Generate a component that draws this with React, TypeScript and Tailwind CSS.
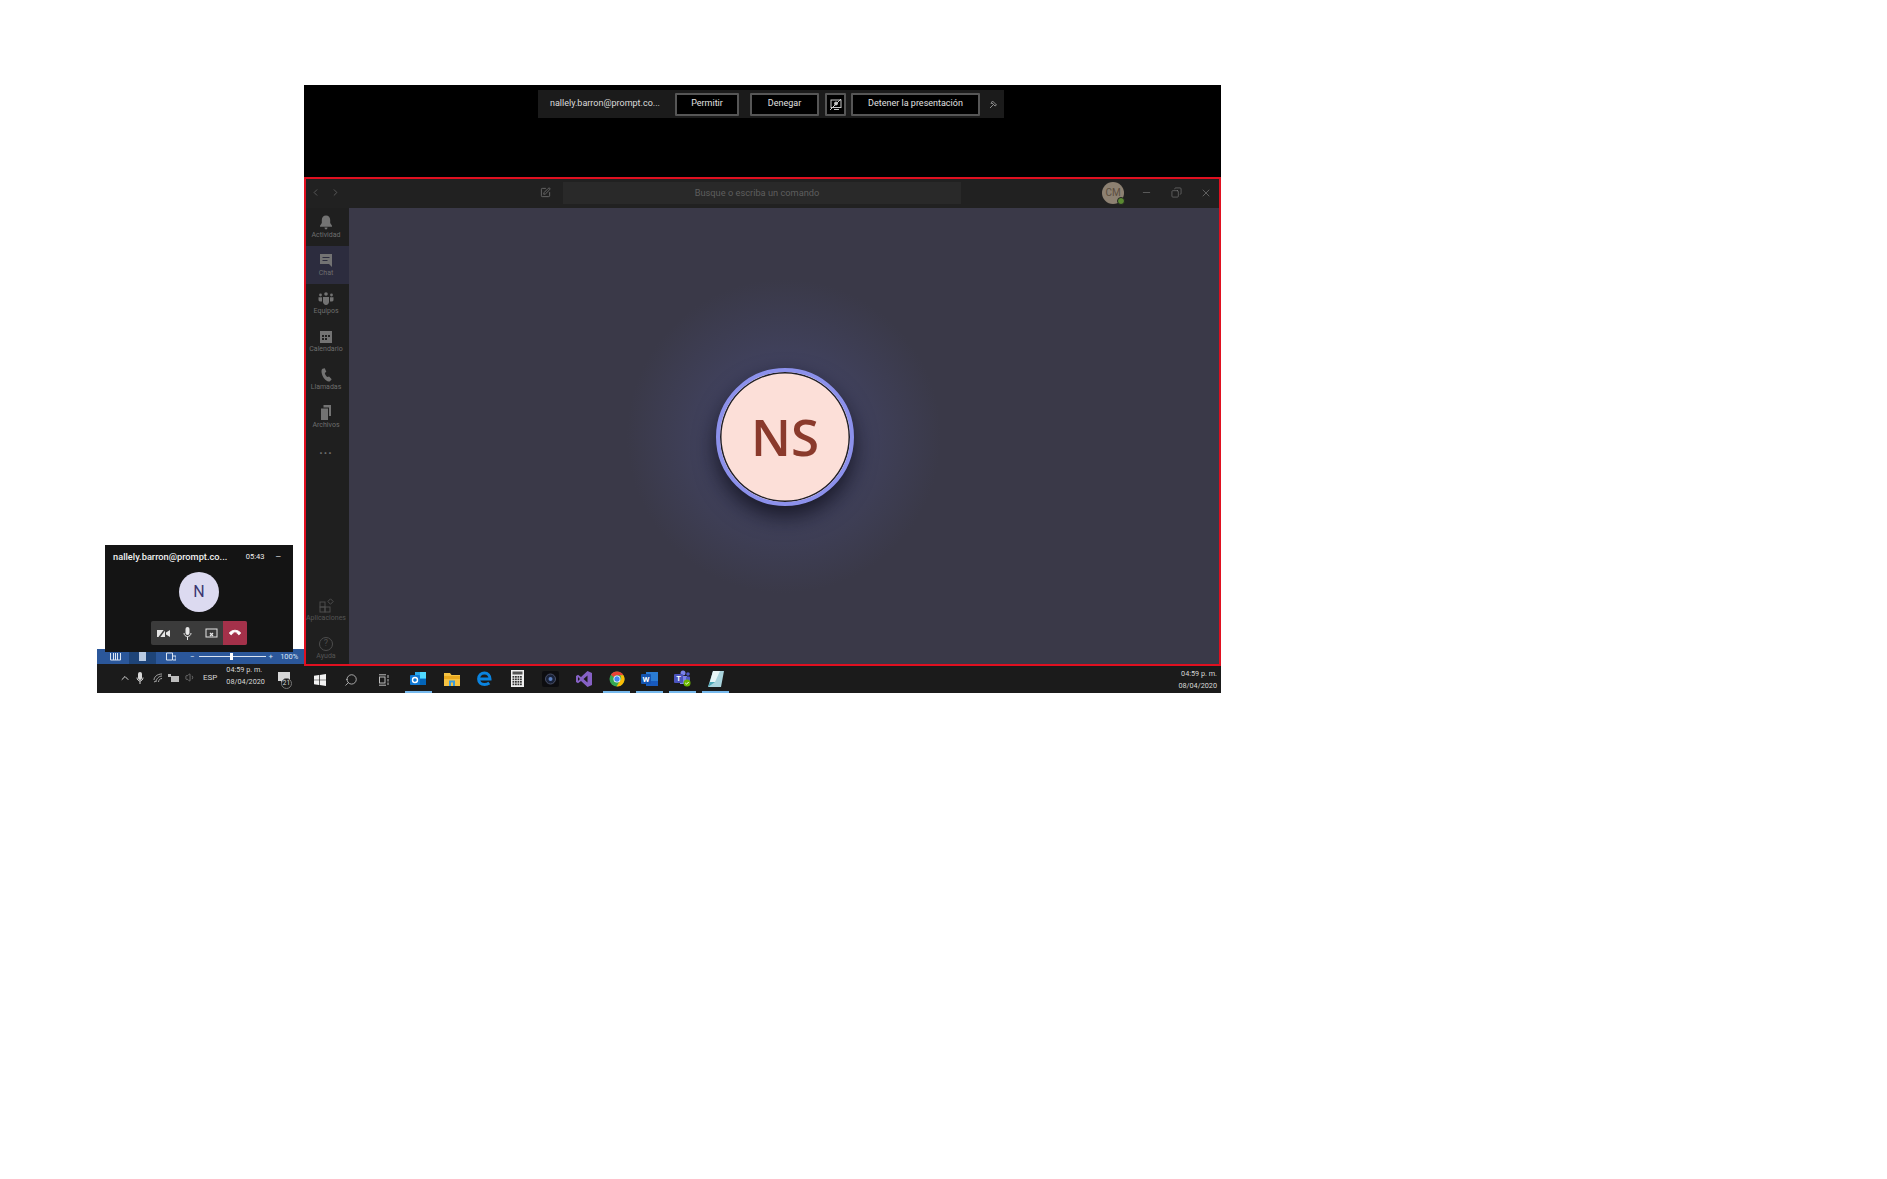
import { ReactNode } from "react";
import { ChevronLeft, ChevronRight, ChevronUp, Copy, Minus, Phone, Search, SquarePen, Volume1, X } from "lucide-react";

const font = "font-['Roboto','Liberation_Sans',sans-serif]";

// icons from the left rail, filled grey like the Teams dark theme
const BellIcon = () => (
  <svg width="14" height="15" viewBox="0 0 14 15" fill="currentColor">
    <path d="M7 0.5c-2.6 0-4.2 2-4.2 4.4v3.2L1 10.8v1h12v-1l-1.8-2.7V4.9C11.2 2.5 9.6 0.5 7 0.5z" />
    <path d="M5.5 12.6h3c0 1-.6 1.8-1.5 1.8s-1.500-.8-1.500-1.800z" />
  </svg>
);

const ChatIcon = () => (
  <svg width="14" height="15" viewBox="0 0 14 15" fill="currentColor">
    <path fillRule="evenodd" d="M1 1h12v13l-3-3H1V1zm2.500 3v1h7V4h-7zm0 3v1h5V7h-5z" />
  </svg>
);

const TeamIcon = () => (
  <svg width="16" height="13" viewBox="0 0 16 13" fill="currentColor">
    <circle cx="8" cy="2" r="1.800" />
    <circle cx="2.500" cy="3" r="1.400" />
    <circle cx="13.500" cy="3" r="1.400" />
    <path d="M5 5h6v5c0 1.500-1.300 3-3 3s-3-1.500-3-3V5z" />
    <path d="M0.500 5.200h3.500V9.500H2C1 9.500.5 8.500.5 7.500z" />
    <path d="M12 5.200h3.500v2.300c0 1-.5 2-1.500 2h-2z" />
  </svg>
);

const CalendarIcon = () => (
  <svg width="14" height="14" viewBox="0 0 14 14" fill="currentColor">
    <path fillRule="evenodd" d="M1 1h12v12H1V1zm2 4v2h2V5H3zm3 0v2h2V5H6zm3 0v2h2V5H9zM3 8v2h2V8H3zm3 0v2h2V8H6z" />
  </svg>
);

const CallIcon = () => (
  <svg width="13" height="14" viewBox="0 0 13 14" fill="currentColor">
    <path d="M2.500.8 4.800.2l1.500 3.600-1.500 1.300c.3 1.500 1.300 3.200 2.500 4l1.800-.7 2.600 2.900-1.700 1.900c-1 .6-2.500.3-3.700-.6C3.700 10.700 1.500 6.500 1.500 3.200c0-1 .3-1.900 1-2.400z" />
  </svg>
);

const FilesIcon = () => (
  <svg width="12" height="15" viewBox="0 0 12 15" fill="currentColor">
    <path d="M3.500 0H11v11H9V2.500H3.500z" />
    <path d="M1 3.500h7V15H1z" />
  </svg>
);

const AppsIcon = () => (
  <svg width="15" height="15" viewBox="0 0 15 15" fill="none" stroke="currentColor" strokeWidth="1">
    <rect x="1" y="4" width="5" height="5" />
    <rect x="1" y="9" width="5" height="5" />
    <rect x="6" y="9" width="5" height="5" />
    <path d="M11.500.8 14.200 3.500 11.500 6.200 8.800 3.500z" />
  </svg>
);

const railTop = [
  { label: "Actividad", icon: <BellIcon /> },
  { label: "Chat", icon: <ChatIcon />, active: true },
  { label: "Equipos", icon: <TeamIcon /> },
  { label: "Calendario", icon: <CalendarIcon /> },
  { label: "Llamadas", icon: <CallIcon /> },
  { label: "Archivos", icon: <FilesIcon /> },
];

const RailItem = ({ label, icon, active, dim }: { label: string; icon: ReactNode; active?: boolean; dim?: boolean }) => (
  <div
    className={`flex h-[38px] flex-col items-center justify-center pr-[3px] ${active ? "bg-[#2c2c3e]" : ""} ${
      dim ? "text-[#4d4d4d]" : "text-[#737373]"
    }`}
  >
    <div className="flex h-[16px] items-center">{icon}</div>
    <span className={`text-[7px] leading-[9px] ${dim ? "text-[#555555]" : "text-[#6e6e6e]"}`}>{label}</span>
  </div>
);

const OutlineButton = ({ children, className }: { children: ReactNode; className: string }) => (
  <div className={`flex h-[23px] items-center justify-center rounded-[1px] border-2 border-[#565656] bg-black text-[9px] text-[#e0e0e0] ${className}`}>
    {children}
  </div>
);

const OutlookIcon = () => (
  <svg width="17" height="16" viewBox="0 0 17 16">
    <rect x="5" y="1" width="11" height="13" fill="#28a8ea" />
    <rect x="10" y="1" width="6" height="6" fill="#50d9ff" />
    <rect x="5" y="8" width="11" height="6" fill="#0364b8" />
    <rect x="0" y="4" width="10" height="10" rx="1" fill="#0f78d4" />
    <circle cx="5" cy="9" r="2.500" fill="none" stroke="#ffffff" strokeWidth="1.400" />
  </svg>
);

const FolderIcon = () => (
  <svg width="16" height="14" viewBox="0 0 16 14">
    <path d="M0 1h6l1.500 2H16v11H0z" fill="#f5c242" />
    <rect x="0" y="4" width="16" height="3" fill="#e9a91f" />
    <rect x="5" y="8.500" width="6" height="5.500" fill="#3a9bdc" />
    <rect x="7" y="10.500" width="2" height="3.500" fill="#f5c242" />
  </svg>
);

const EdgeIcon = () => (
  <svg width="15" height="15" viewBox="0 0 15 15" fill="none" stroke="#0a84e0" strokeWidth="3">
    <path d="M2 8h11c0-3.500-2.300-6-5.500-6S1.600 4.500 1.600 8s2.500 5.500 5.900 5.500c2 0 3.500-.5 4.800-1.500" />
  </svg>
);

const CalcIcon = () => (
  <svg width="13" height="17" viewBox="0 0 13 17">
    <rect width="13" height="17" fill="#f0f0f0" />
    <rect x="1.500" y="1.500" width="10" height="3" fill="#555555" />
    {[6, 8.500, 11, 13.500].map((y) =>
      [1.500, 4, 6.500, 9].map((x) => <rect key={`${x}-${y}`} x={x} y={y} width="1.800" height="1.700" fill="#333333" />)
    )}
  </svg>
);

const CameraIcon = () => (
  <svg width="17" height="16" viewBox="0 0 17 16">
    <rect width="17" height="16" rx="2" fill="#0d0d10" />
    <circle cx="8.500" cy="8" r="5" fill="#1a2238" stroke="#4a5068" />
    <circle cx="8.500" cy="8" r="2" fill="#5b7fc0" />
  </svg>
);

const VisualStudioIcon = () => (
  <svg width="16" height="16" viewBox="0 0 16 16">
    <path d="M11.500 0 16 2v12l-4.500 2L5 10l-3 2.300L0 11V5l2-1.300L5 6z" fill="#8661c5" />
    <path d="M2 6v4l2-2zM11.500 4.500 7.500 8l4 3.500z" fill="#1b1b1b" />
  </svg>
);

const ChromeIcon = () => (
  <svg width="16" height="16" viewBox="0 0 16 16">
    <circle cx="8" cy="8" r="7.500" fill="#34a853" />
    <path d="M8 .5a7.500 7.500 0 0 1 6.500 3.750H8A3.750 3.750 0 0 0 4.700 6.200L1.900 3.700A7.500 7.500 0 0 1 8 .5z" fill="#ea4335" />
    <path d="M14.500 4.250A7.500 7.500 0 0 1 7.500 15.500L10.800 10a3.750 3.750 0 0 0 .2-5.750z" fill="#fbbc05" />
    <circle cx="8" cy="8" r="3.500" fill="#ffffff" />
    <circle cx="8" cy="8" r="2.700" fill="#4285f4" />
  </svg>
);

const WordIcon = () => (
  <svg width="17" height="16" viewBox="0 0 17 16">
    <rect x="5" y="1" width="12" height="14" fill="#2b7cd3" />
    <rect x="5" y="10" width="12" height="5" fill="#185abd" />
    <rect x="0" y="3" width="10" height="10" rx="1" fill="#1454b0" />
    <text x="5" y="11" fontSize="8" fontWeight="700" textAnchor="middle" fill="#ffffff">W</text>
  </svg>
);

const TeamsIcon = () => (
  <svg width="17" height="17" viewBox="0 0 17 17">
    <circle cx="9" cy="3" r="2.500" fill="#7b83eb" />
    <circle cx="14" cy="4" r="1.800" fill="#5059c9" />
    <rect x="6" y="6" width="7" height="8" fill="#7b83eb" />
    <rect x="12" y="6.500" width="4" height="6" rx="1" fill="#5059c9" />
    <rect x="0" y="4" width="9" height="9" rx="1" fill="#4b53bc" />
    <text x="4.500" y="11" fontSize="7.500" fontWeight="700" textAnchor="middle" fill="#ffffff">T</text>
    <circle cx="13" cy="13" r="3.500" fill="#6bb700" />
    <path d="M11.300 13l1.200 1.200 2.200-2.200" fill="none" stroke="#ffffff" />
  </svg>
);

const NotesIcon = () => (
  <svg width="16" height="16" viewBox="0 0 16 16">
    <path d="M5 0h11l-3 16H0z" fill="#a9d3dc" />
    <path d="M5 0h7l-5 11H2z" fill="#e8f5f6" />
    <path d="M0 16l2-5h5z" fill="#4aa6b5" />
  </svg>
);

const taskbarApps = [
  { key: "outlook", icon: <OutlookIcon />, open: true },
  { key: "explorer", icon: <FolderIcon /> },
  { key: "edge", icon: <EdgeIcon /> },
  { key: "calc", icon: <CalcIcon /> },
  { key: "camera", icon: <CameraIcon /> },
  { key: "vs", icon: <VisualStudioIcon /> },
  { key: "chrome", icon: <ChromeIcon />, open: true },
  { key: "word", icon: <WordIcon />, open: true },
  { key: "teams", icon: <TeamsIcon />, open: true },
  { key: "notes", icon: <NotesIcon />, open: true },
];

const Taskbar = () => (
  <div className="flex h-[27px] items-stretch bg-[#1b1b1b] pl-[3px]">
    <div className="flex h-full w-[26px] items-center justify-center">
      <svg width="12" height="12" viewBox="0 0 12 12" fill="#f2f2f2">
        <path d="M0 1.700 5 1v4.700H0zM5.700.9 12 0v5.700H5.700zM0 6.300h5V11l-5-.7zM5.700 6.300H12V12l-6.300-.9z" />
      </svg>
    </div>
    <div className="ml-[1px] flex w-[33px] items-center justify-center text-[#cfcfcf]">
      <Search size={14} strokeWidth={1.300} className="-scale-x-100" />
    </div>
    <div className="ml-[1px] flex w-[32px] items-center justify-center">
      <svg width="12" height="12" viewBox="0 0 12 12" fill="none" stroke="#bdbdbd">
        <rect x="1.500" y="3" width="5.500" height="6" />
        <path d="M1 .8h7M1 11.200h7M10 1v3M10 5v2.500M10 8.500v2.500" />
      </svg>
    </div>
    <div className="flex gap-[6px] pl-[5px]">
      {taskbarApps.map((app) => (
        <div
          key={app.key}
          className={`flex h-full w-[27px] items-center justify-center border-b-2 ${app.open ? "border-[#76b9ed]" : "border-transparent"}`}
        >
          {app.icon}
        </div>
      ))}
    </div>
    <div className="ml-auto flex flex-col items-end justify-center pr-[4px] text-[7.250px] leading-[12px] text-[#d8d8d8]">
      <span>04:59 p. m.</span>
      <span>08/04/2020</span>
    </div>
  </div>
);

const MainWindow = () => (
  <div className="absolute left-[304px] top-[85px] flex h-[608px] w-[917px] flex-col">
    <div className="h-[92px] bg-black pl-[234px] pt-[5px]">
      <div className="flex h-[28px] w-[466px] items-center bg-[#1b1b1b]">
        <span className="w-[137px] pl-[12px] text-[9px] text-[#dcdcdc]">nallely.barron@prompt.co...</span>
        <OutlineButton className="w-[64px]">Permitir</OutlineButton>
        <OutlineButton className="ml-[11px] w-[69px]">Denegar</OutlineButton>
        <OutlineButton className="ml-[6px] w-[21px]">
          <svg width="13" height="13" viewBox="0 0 13 13" fill="none" stroke="#c8c8c8">
            <rect x="2" y="2" width="10" height="7.500" />
            <path d="M5 11.500h5M1 12 12 1" />
            <circle cx="7" cy="5.500" r="1.500" fill="#c8c8c8" />
          </svg>
        </OutlineButton>
        <OutlineButton className="ml-[5px] w-[129px]">Detener la presentación</OutlineButton>
        <svg className="ml-[9px]" width="9" height="9" viewBox="0 0 9 9" fill="none" stroke="#8a8a8a">
          <path d="M3.500 1 7.500 5 6 6 3 3 2 3.500zM4 5 1 8" />
        </svg>
      </div>
    </div>
    <div className="flex h-[489px] flex-col border-2 border-[#e01020] bg-[#212121]">
      <div className="flex h-[29px] items-center pb-[2px]">
        <div className="flex w-[45px] items-center gap-[9px] pl-[4px] text-[#5c5c5c]">
          <ChevronLeft size={11} />
          <ChevronRight size={11} />
        </div>
        <div className="ml-[186px] flex w-[16px] justify-center text-[#6a6a6a]">
          <SquarePen size={11} />
        </div>
        <div className="ml-[10px] flex h-[22px] w-[398px] items-center justify-center bg-[#292929] pr-[10px] text-[9.250px] text-[#5e5e5e]">
          Busque o escriba un comando
        </div>
        <div className="relative ml-[141px] flex h-[22px] w-[22px] items-center justify-center rounded-full bg-[#8d8172] text-[10px] text-[#5a4d3e]">
          CM
          <span className="absolute -bottom-[1px] -right-[1px] h-[8px] w-[8px] rounded-full border border-[#212121] bg-[#5b8a32]" />
        </div>
        <div className="ml-[17px] flex w-[71px] items-center justify-between text-[#808080]">
          <Minus size={11} strokeWidth={1.300} />
          <Copy size={11} strokeWidth={1.300} className="-scale-x-100" />
          <X size={12} strokeWidth={1.300} />
        </div>
      </div>
      <div className="flex min-h-0 flex-1">
        <div className="flex w-[43px] flex-col bg-[#1f1f1f]">
          {railTop.map((item) => (
            <RailItem key={item.label} {...item} />
          ))}
          <div className="flex h-[28px] items-center justify-center pr-[3px] text-[12px] font-bold tracking-[1px] text-[#6e6e6e]">...</div>
          <div className="mt-auto -mb-[3px]">
            <RailItem label="Aplicaciones" icon={<AppsIcon />} dim />
            <RailItem
              label="Ayuda"
              dim
              icon={
                <div className="flex h-[14px] w-[14px] items-center justify-center rounded-full border border-[#4d4d4d] text-[9px]">?</div>
              }
            />
          </div>
        </div>
        <div className="flex flex-1 items-center justify-center bg-[#3a3948] bg-[radial-gradient(circle_at_center,#454668_0%,#40415c_16%,#3a3948_32%)] pl-[2px] pt-[2px]">
          <div className="flex h-[138px] w-[138px] items-center justify-center rounded-full border-[4px] border-[#8c91ec] bg-[#fcdfd8] pb-[2px] font-['Open_Sans',sans-serif] text-[51px] font-semibold text-[#8a3a2c] shadow-[inset_0_0_0_1.500px_#1f1f26,0_10px_22px_rgba(10,10,20,0.75)]">
            NS
          </div>
        </div>
      </div>
    </div>
    <Taskbar />
  </div>
);

const TrayBars = () => (
  <div className="absolute left-[97px] top-[649px] flex h-[44px] w-[207px] flex-col">
    <div className="flex h-[15px] items-center bg-[#2b579a] text-[#dbe5f3]">
      <svg className="ml-[13px]" width="11" height="9" viewBox="0 0 11 9" fill="none" stroke="#dbe5f3">
        <path d="M.5 1v7h10V1M3.500 1v7M5.500 1v7M7.500 1v7" />
      </svg>
      <div className="ml-[8px] flex h-full w-[27px] items-center justify-center bg-[#1e4478]">
        <svg width="7" height="9" viewBox="0 0 7 9" fill="#b9cbe4">
          <path d="M0 0h7v9H0z" />
        </svg>
      </div>
      <svg className="ml-[10px]" width="10" height="9" viewBox="0 0 10 9" fill="none" stroke="#dbe5f3">
        <path d="M.5 1h6v7h-6zM7 4h3v4H7" />
      </svg>
      <span className="ml-[14px] text-[8px] leading-none">−</span>
      <div className="relative ml-[4px] h-[1px] w-[67px] bg-[#dbe5f3]">
        <span className="absolute -top-[3px] left-[31px] h-[7px] w-[3px] bg-white" />
      </div>
      <span className="ml-[3px] text-[8px] leading-none">+</span>
      <span className="ml-[7px] text-[7.500px]">100%</span>
    </div>
    <div className="flex flex-1 items-center bg-[#1b1b1b] pb-[2px] text-[#d8d8d8]">
      <ChevronUp size={12} className="ml-[22px]" />
      <svg className="ml-[5px]" width="8" height="12" viewBox="0 0 8 12" fill="#d8d8d8">
        <rect x="2" y="0" width="4" height="8" rx="2" />
        <path d="M1 5.500c0 2 1.300 3.500 3 3.500s3-1.500 3-3.500" fill="none" stroke="#d8d8d8" />
        <path d="M3.500 9h1v3h-1z" />
      </svg>
      <svg className="ml-[9px]" width="10" height="10" viewBox="0 0 10 10" fill="none" stroke="#a5a5a5">
        <path d="M1 9 3 8M3 9c0-3 3-6 6-6M5.500 9c0-2 1.500-3.500 3.500-3.500M1 7c0-3 3-6 8-6" />
      </svg>
      <svg className="ml-[5px]" width="11" height="8" viewBox="0 0 11 8" fill="#bdbdbd">
        <path d="M0 0h3v3H0zM3 2h8v6H3z" />
      </svg>
      <Volume1 size={11} strokeWidth={1.200} className="ml-[6px] text-[#a5a5a5]" />
      <span className="ml-[7px] text-[8px]">ESP</span>
      <div className="ml-[9px] flex flex-col pb-[3px] text-[7.250px] leading-[12px]">
        <span>04:59 p. m.</span>
        <span>08/04/2020</span>
      </div>
      <div className="relative ml-[13px] h-[12px] w-[12px]">
        <svg width="12" height="12" viewBox="0 0 12 12" fill="#d8d8d8">
          <path d="M0 0h12v9H5l-2 3V9H0z" />
        </svg>
        <span className="absolute -bottom-[5px] left-[3px] flex h-[11px] w-[11px] items-center justify-center rounded-full border border-[#777777] bg-[#1b1b1b] text-[6.500px] leading-none">
          21
        </span>
      </div>
    </div>
  </div>
);

const MiniCall = () => (
  <div className="absolute left-[105px] top-[545px] flex h-[107px] w-[188px] flex-col items-center bg-[#141414]">
    <div className="flex h-[24px] w-full items-center pl-[8px] pr-[12px] text-[#f0f0f0]">
      <span className="text-[9.250px] font-medium">nallely.barron@prompt.co...</span>
      <span className="ml-auto text-[7.500px]">05:43</span>
      <span className="ml-[11px] text-[7px]">—</span>
    </div>
    <div className="mt-[3px] flex h-[40px] w-[40px] items-center justify-center rounded-full bg-[#dcdaf0] text-[16px] text-[#3b3670]">N</div>
    <div className="mt-[9px] flex h-[24px] w-[96px] items-stretch overflow-hidden rounded-[2px] bg-[#3b3b3b] text-[#e6e6e6]">
      <div className="flex w-[24px] items-center justify-center">
        <svg width="13" height="11" viewBox="0 0 13 11" fill="#e6e6e6">
          <path d="M0 2h8v7H0zM9 4.500l4-2.500v7L9 6.500z" />
          <path d="M1 11 9 0" stroke="#3b3b3b" strokeWidth="1.500" />
        </svg>
      </div>
      <div className="flex w-[24px] items-center justify-center">
        <svg width="9" height="13" viewBox="0 0 9 13" fill="#e6e6e6">
          <rect x="2.500" y="0" width="4" height="8" rx="2" />
          <path d="M1 6c0 2 1.500 3.500 3.500 3.500S8 8 8 6M4.500 9.500V13" fill="none" stroke="#e6e6e6" />
        </svg>
      </div>
      <div className="flex w-[24px] items-center justify-center">
        <svg width="13" height="11" viewBox="0 0 13 11" fill="none" stroke="#e6e6e6">
          <rect x="1" y="1" width="11" height="8" />
          <path d="M5 5l3 3M8 5 5 8" strokeWidth="1.300" />
        </svg>
      </div>
      <div className="flex w-[24px] items-center justify-center bg-[#a4314a] text-white">
        <Phone size={10} fill="currentColor" className="rotate-[135deg]" />
      </div>
    </div>
  </div>
);

export default function App() {
  return (
    <div className={`relative h-[1179px] w-[1887px] overflow-hidden bg-white ${font}`}>
      <MainWindow />
      <TrayBars />
      <MiniCall />
    </div>
  );
}
